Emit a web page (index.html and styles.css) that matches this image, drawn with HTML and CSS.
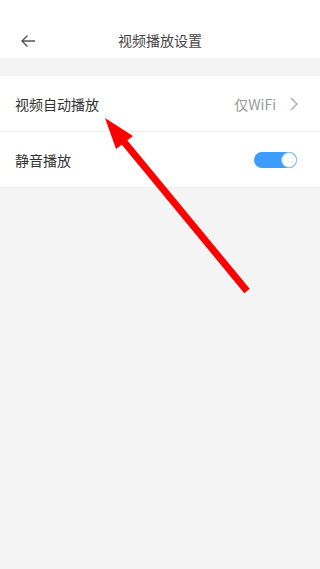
FILE: index.html
```html
<!DOCTYPE html>
<html>
	<head>
		<meta charset="utf-8">
		<title>视频播放设置</title>
		<link rel="stylesheet" href="styles.css">
	</head>
	<body>
		<div class="header">
			<svg class="back" width="16" height="14" viewBox="0 0 16 14">
				<path d="M15 7H2M7.5 1.5L2 7l5.5 5.5" fill="none" stroke="#555" stroke-width="1.4"/>
			</svg>
			<div class="title">视频播放设置</div>
		</div>

		<div class="group">
			<div class="row">
				<span class="label">视频自动播放</span>
				<span class="value">仅WiFi</span>
				<svg class="chevron" width="8" height="14" viewBox="0 0 8 14">
					<path d="M1 1l6 6-6 6" fill="none" stroke="#aaa" stroke-width="1.3"/>
				</svg>
			</div>
			<div class="row">
				<span class="label">静音播放</span>
				<span class="toggle"><span class="knob"></span></span>
			</div>
		</div>

		<svg class="pointer" width="320" height="569" viewBox="0 0 320 569">
			<line x1="247" y1="291" x2="120" y2="137" stroke="#ff0000" stroke-width="7"/>
			<polygon points="105,118 116,149 133,136" fill="#ff0000"/>
		</svg>
	</body>
</html>
```

FILE: styles.css
```css
body
{
	margin: 0;
	background-color: #f4f4f4;
	font-family: "Noto Sans CJK SC", "Noto Sans", sans-serif;
	color: #333;
	height: 569px;
	overflow: hidden;
	position: relative;
}

.header
{
	background-color: white;
	height: 58px;
	display: flex;
	align-items: center;
	justify-content: center;
	position: relative;
	margin-bottom: 18px;
}

.back
{
	position: absolute;
	left: 20px;
	top: 34px;
}

.title
{
	font-size: 14px;
	color: #444;
	margin-top: 22px;
}

.group
{
	background-color: white;
}

.row
{
	height: 55px;
	display: flex;
	align-items: center;
	padding: 0 22px 0 15px;
	border-bottom: 1px solid #eeeeee;
}

.label
{
	font-size: 14px;
	flex: 1;
}

.value
{
	font-size: 14px;
	color: #999;
	margin-right: 14px;
}

.toggle
{
	width: 43px;
	height: 16px;
	border-radius: 8px;
	background-color: #3c9cff;
	position: relative;
	margin-right: 1px;
}

.knob
{
	position: absolute;
	right: 0;
	top: 0;
	width: 14px;
	height: 14px;
	border-radius: 50%;
	background-color: white;
	border: 1px solid #8cc3ff;
}

.pointer
{
	position: absolute;
	left: 0;
	top: 0;
}
```
